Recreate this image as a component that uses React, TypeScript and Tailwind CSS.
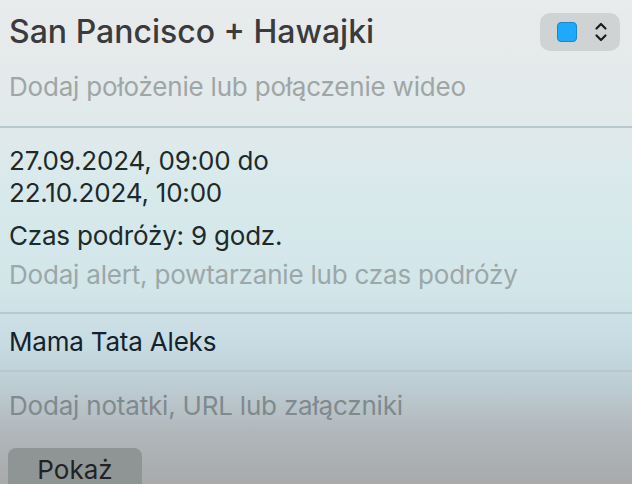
import React from 'react';

const font = { fontFamily: 'Inter, "Noto Sans", sans-serif' };

const Divider: React.FC = () => <div className="h-[2px] w-full shrink-0 bg-[#b6cacd]" />;

const ColorPicker: React.FC = () => (
	<button className="flex h-[38px] w-[80px] items-center justify-between rounded-[10px] bg-[#d0d3d4] pl-[17px] pr-[12px]">
		<span className="block h-[20px] w-[20px] rounded-[4px] border border-[#1a86c4] bg-[#1fa9fb]" />
		<svg width="14" height="22" viewBox="0 0 14 22" fill="none" stroke="#1c1c1c" strokeWidth="2.2" strokeLinecap="round" strokeLinejoin="round">
			<path d="M2.5 7.5 L7 3 L11.5 7.5" />
			<path d="M2.5 14.5 L7 19 L11.5 14.5" />
		</svg>
	</button>
);

export default function App() {
	return (
		<div
			className="flex h-[484px] w-[632px] flex-col overflow-hidden bg-[linear-gradient(180deg,#e9ebec_0%,#e2eaeb_22%,#d7e9eb_42%,#d2e5e9_60%,#c6dae2_72%,#bdccd3_80%,#b0b6b9_90%,#a8aaab_100%)]"
			style={font}
		>
			{/* title + colour */}
			<div className="flex h-[40px] mt-[12px] shrink-0 items-center justify-between pl-[9px] pr-[12px]">
				<h1 className="text-[32px] leading-[40px] font-medium text-[#3a3b3c]">San Pancisco + Hawajki</h1>
				<ColorPicker />
			</div>
			<div className="mt-[18px] shrink-0 px-[9px] text-[26px] leading-[34px] tracking-[-0.2px] text-[#a0a5a6]">
				Dodaj położenie lub połączenie wideo
			</div>
			<div className="mt-[22px] shrink-0">
				<Divider />
			</div>

			{/* dates */}
			<div className="shrink-0 px-[9px] pt-[17px] pb-[21px] text-[26px] leading-[32px] tracking-[-0.2px]">
				<div className="text-[#1d2a2b]">27.09.2024, 09:00 do</div>
				<div className="text-[#1d2a2b]">22.10.2024, 10:00</div>
				<div className="mt-[11px] text-[#1d2a2b]">Czas podróży: 9 godz.</div>
				<div className="mt-[7px] text-[#9ca7a9]">Dodaj alert, powtarzanie lub czas podróży</div>
			</div>
			<Divider />

			<div className="shrink-0 px-[9px] pt-[12px] pb-[12px] text-[26px] leading-[32px] tracking-[-0.2px] text-[#14232b]">Mama Tata Aleks</div>
			<Divider />

			<div className="shrink-0 px-[9px] pt-[18px] text-[26px] leading-[32px] tracking-[-0.2px] text-[#7f8a8f]">
				Dodaj notatki, URL lub załączniki
			</div>

			<div className="mt-[26px] shrink-0 px-[8px]">
				<button className="h-[44px] w-[134px] rounded-[8px] bg-[#8f9495] text-[26px] leading-[40px] text-[#1f2324]">
					Pokaż
				</button>
			</div>
		</div>
	);
}
